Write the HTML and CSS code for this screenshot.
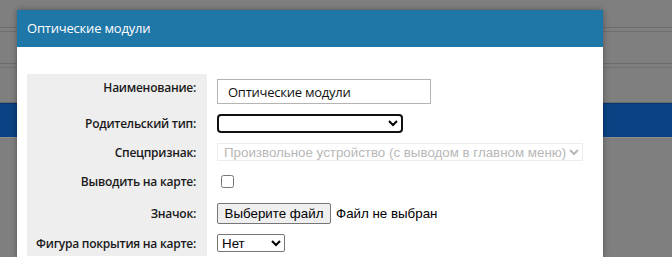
FILE: index.html
```html
<!DOCTYPE html>
<html lang="ru">
<head>
<meta charset="utf-8">
<title>Оптические модули</title>
<link rel="stylesheet" href="styles.css">
</head>
<body>
<div class="page">
  <div class="band band-top"></div>
  <div class="band band-mid"></div>
  <div class="band band-low"></div>
  <div class="navbar"></div>
</div>
<div class="dialog">
  <div class="dialog-header">Оптические модули</div>
  <div class="dialog-body">
    <div class="form">
      <div class="lbl r1">Наименование:</div>
      <div class="val r1"><input class="text-input" type="text" value="Оптические модули"></div>

      <div class="lbl r2">Родительский тип:</div>
      <div class="val r2"><select class="sel sel-parent"><option></option></select></div>

      <div class="lbl r3">Спецпризнак:</div>
      <div class="val r3"><select class="sel sel-spec" disabled><option>Произвольное устройство (с выводом в главном меню)</option></select></div>

      <div class="lbl r4">Выводить на карте:</div>
      <div class="val r4"><input class="check" type="checkbox"></div>

      <div class="lbl r5">Значок:</div>
      <div class="val r5"><span class="file-btn">Выберите файл</span><span class="file-name">Файл не выбран</span></div>

      <div class="lbl r6">Фигура покрытия на карте:</div>
      <div class="val r6"><select class="sel sel-shape"><option>Нет</option></select></div>
    </div>
  </div>
</div>
</body>
</html>
```

FILE: styles.css
```css
html, body {
  margin: 0;
  padding: 0;
}
body {
  width: 672px;
  height: 257px;
  overflow: hidden;
  background: #7f7f7f;
  position: relative;
  font-family: "Open Sans", "Noto Sans", sans-serif;
}
.page {
  display: flex;
  flex-direction: column;
}
.band {
  box-sizing: border-box;
}
.band-top {
  height: 32px;
  border-bottom: 1px solid #6f6f6f;
  box-shadow: inset 0 -3px 0 #7f7f7f, inset 0 -4px 0 #6c6c6c;
}
.band-mid {
  height: 36px;
  border-bottom: 1px solid #6f6f6f;
  box-shadow: inset 0 -3px 0 #7f7f7f, inset 0 -4px 0 #6c6c6c;
}
.band-low {
  height: 35px;
  border-bottom: 1px solid #6a6a6a;
}
.navbar {
  height: 33px;
  background: #0a4283;
  border-top: 1px solid #073670;
  border-bottom: 1px solid #8c8c8c;
}
.dialog {
  position: absolute;
  left: 17px;
  top: 10px;
  width: 586px;
  height: 247px;
  overflow: hidden;
  background: #fff;
  box-shadow: 0 0 6px rgba(0,0,0,0.35);
}
.dialog-header {
  height: 37px;
  background: #1f77a7;
  color: #fff;
  font-size: 13px;
  letter-spacing: -0.2px;
  line-height: 37px;
  padding-left: 10px;
}
.dialog-body {
  padding: 27px 10px 0 10px;
}
.form {
  display: grid;
  grid-template-columns: 180px 1fr;
  grid-template-rows: 35px 29px 28px 30px 34px 26px;
}
.lbl {
  background: #eeeeee;
  text-align: right;
  padding-right: 11px;
  font-size: 12px;
  letter-spacing: -0.25px;
  font-weight: 600;
  color: #1a1a1a;
  display: flex;
  align-items: center;
  justify-content: flex-end;
}
.lbl.r1 { padding-bottom: 9px; box-sizing: border-box; }
.val {
  padding-left: 10px;
  display: flex;
  align-items: center;
}
.val.r1 { align-items: flex-start; padding-top: 5px; box-sizing: border-box; }
.text-input {
  box-sizing: border-box;
  width: 214px;
  height: 25px;
  border: 1px solid #b4b4b4;
  padding: 0 10px;
  margin: 0;
  font-family: "Open Sans", "Noto Sans", sans-serif;
  font-size: 13px;
  letter-spacing: -0.25px;
  color: #111;
  outline: none;
}
.sel {
  box-sizing: border-box;
  margin: 0;
  font-family: "Liberation Sans", Arial, sans-serif;
  font-size: 13.333px;
  background: #fff;
  color: #000;
}
.sel-parent {
  width: 186px;
  height: 19px;
  border: 2px solid #101010;
  border-radius: 4px;
}
.sel-spec {
  width: 366px;
  height: 18px;
  border: 1px solid #e4e4e4;
  color: #9a9a9a;
  background: #fff;
  padding-left: 2px;
}
.sel-shape {
  width: 68px;
  height: 18px;
  border: 1px solid #767676;
  border-radius: 2px;
}
.check {
  box-sizing: border-box;
  width: 13px;
  height: 13px;
  margin: 0 0 0 4px;
}
.file-btn {
  box-sizing: border-box;
  height: 21px;
  width: 114px;
  border: 1px solid #767676;
  border-radius: 2px;
  background: #efefef;
  font-family: "Liberation Sans", Arial, sans-serif;
  font-size: 13.333px;
  line-height: 19px;
  text-align: center;
  color: #000;
}
.file-name {
  margin-left: 5px;
  font-family: "Liberation Sans", Arial, sans-serif;
  font-size: 13.333px;
  color: #000;
}
```
